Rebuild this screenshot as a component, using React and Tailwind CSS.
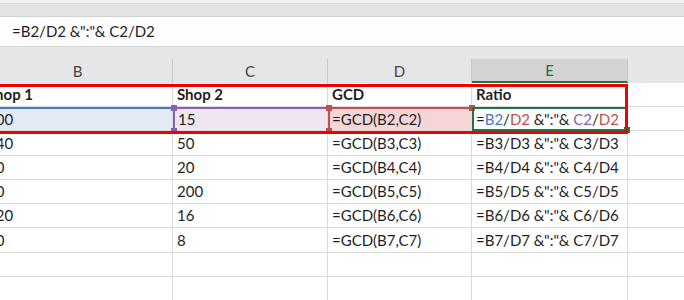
import React from 'react';

const cols = [
  { key: 'B', w: 'w-[190px]' },
  { key: 'C', w: 'w-[155px]' },
  { key: 'D', w: 'w-[144px]' },
  { key: 'E', w: 'w-[156px]' },
];

const rows = [
  { h: 'h-[25px]', b: '140', c: '50', d: '=GCD(B3,C3)', e: '=B3/D3 &":"& C3/D3' },
  { h: 'h-[24px]', b: '80', c: '20', d: '=GCD(B4,C4)', e: '=B4/D4 &":"& C4/D4' },
  { h: 'h-[24px]', b: '50', c: '200', d: '=GCD(B5,C5)', e: '=B5/D5 &":"& C5/D5' },
  { h: 'h-[24px]', b: '120', c: '16', d: '=GCD(B6,C6)', e: '=B6/D6 &":"& C6/D6' },
  { h: 'h-[25px]', b: '40', c: '8', d: '=GCD(B7,C7)', e: '=B7/D7 &":"& C7/D7' },
  { h: 'h-[24px]', b: '', c: '', d: '', e: '' },
  { h: 'h-[24px]', b: '', c: '', d: '', e: '' },
];

const Cell = ({ w, className = '', children }) => (
  <div className={`${w} shrink-0 h-full border-r border-b border-[#dadada] pl-[4px] flex items-center whitespace-nowrap overflow-hidden ${className}`}>
    {children}
  </div>
);

const Handle = ({ color, pos }) => (
  <span className={`absolute w-[6px] h-[6px] ${color} ${pos}`} />
);

export default function App() {
  return (
    <div className="w-[684px] h-[300px] overflow-hidden bg-white relative font-['Lato',sans-serif] text-[15px] text-[#1f1f1f]">
      {/* ribbon edge + formula bar */}
      <div className="h-[4px] bg-[#f2f2f2] border-b border-[#dcdcdc]" />
      <div className="h-[13px] bg-[#e4e4e4] border-b border-[#d2d2d2]" />
      <div className="h-[30px] bg-[#fdfdfd] border-b border-[#d6d6d6] flex items-center pl-[12px]">
        =B2/D2 &amp;":"&amp; C2/D2
      </div>
      <div className="h-[12px] bg-[#e6e6e6]" />

      {/* column headers */}
      <div className="h-[24px] flex ml-[-17px] bg-[#e6e6e6] text-[#444]">
        {cols.map((c) => (
          <div
            key={c.key}
            className={`${c.w} shrink-0 h-full border-r border-[#c9c9c9] flex items-center justify-center ${c.key === 'E' ? 'bg-[#d3d3d3] text-[#2b6b45] border-b-2 border-b-[#217346]' : ''}`}
          >
            {c.key}
          </div>
        ))}
        <div className="flex-1 h-full" />
      </div>

      {/* row 1 headers */}
      <div className="h-[24px] flex ml-[-17px] font-bold">
        <Cell w="w-[190px]">Shop 1</Cell>
        <Cell w="w-[155px]">Shop 2</Cell>
        <Cell w="w-[144px]">GCD</Cell>
        <Cell w="w-[156px]">Ratio</Cell>
        <div className="flex-1 h-full border-b border-[#dadada]" />
      </div>

      {/* row 2 with range highlights */}
      <div className="h-[24px] flex ml-[-17px] relative">
        <Cell w="w-[190px]" className="bg-[#e3eaf5] border-t-2 border-t-[#4a78c0]">300</Cell>
        <div className="w-[155px] shrink-0 h-full relative bg-[#efe6f1] border-t-2 border-l-2 border-[#8a61b0] border-b border-b-[#dadada] border-r border-r-[#dadada] pl-[3px] flex items-center">
          15
          <Handle color="bg-[#8a61b0]" pos="-left-[4px] -top-[4px]" />
          <Handle color="bg-[#8a61b0]" pos="-left-[4px] -bottom-[4px]" />
        </div>
        <div className="w-[144px] shrink-0 h-full relative bg-[#f5d5d6] border-t-2 border-l-2 border-[#c0504d] border-b border-b-[#dadada] pl-[2px] flex items-center">
          =GCD(B2,C2)
          <Handle color="bg-[#c0504d]" pos="-left-[4px] -top-[4px]" />
          <Handle color="bg-[#c0504d]" pos="-left-[4px] -bottom-[4px]" />
          <Handle color="bg-[#c0504d]" pos="-right-[3px] -top-[4px]" />
        </div>
        <div className="w-[156px] shrink-0 h-full relative border-2 border-[#217346] pl-[2px] flex items-center whitespace-nowrap">
          =<span className="text-[#4a78c0]">B2</span>/<span className="text-[#c0504d]">D2</span>&nbsp;&amp;":"&amp;&nbsp;<span className="text-[#8a61b0]">C2</span>/<span className="text-[#c0504d]">D2</span>
          <Handle color="bg-[#217346]" pos="-right-[4px] -bottom-[4px]" />
        </div>
        <div className="flex-1 h-full border-b border-[#dadada]" />
      </div>

      {/* remaining rows */}
      {rows.map((r, i) => (
        <div key={i} className={`${r.h} flex ml-[-17px]`}>
          <Cell w="w-[190px]">{r.b}</Cell>
          <Cell w="w-[155px]">{r.c}</Cell>
          <Cell w="w-[144px]">{r.d}</Cell>
          <Cell w="w-[156px]">{r.e}</Cell>
          <div className="flex-1 h-full border-b border-[#dadada]" />
        </div>
      ))}

      {/* red annotation box */}
      <div className="absolute left-[-6px] top-[84px] w-[634px] h-[50px] border-[3px] border-[#f00000] pointer-events-none" />
    </div>
  );
}
